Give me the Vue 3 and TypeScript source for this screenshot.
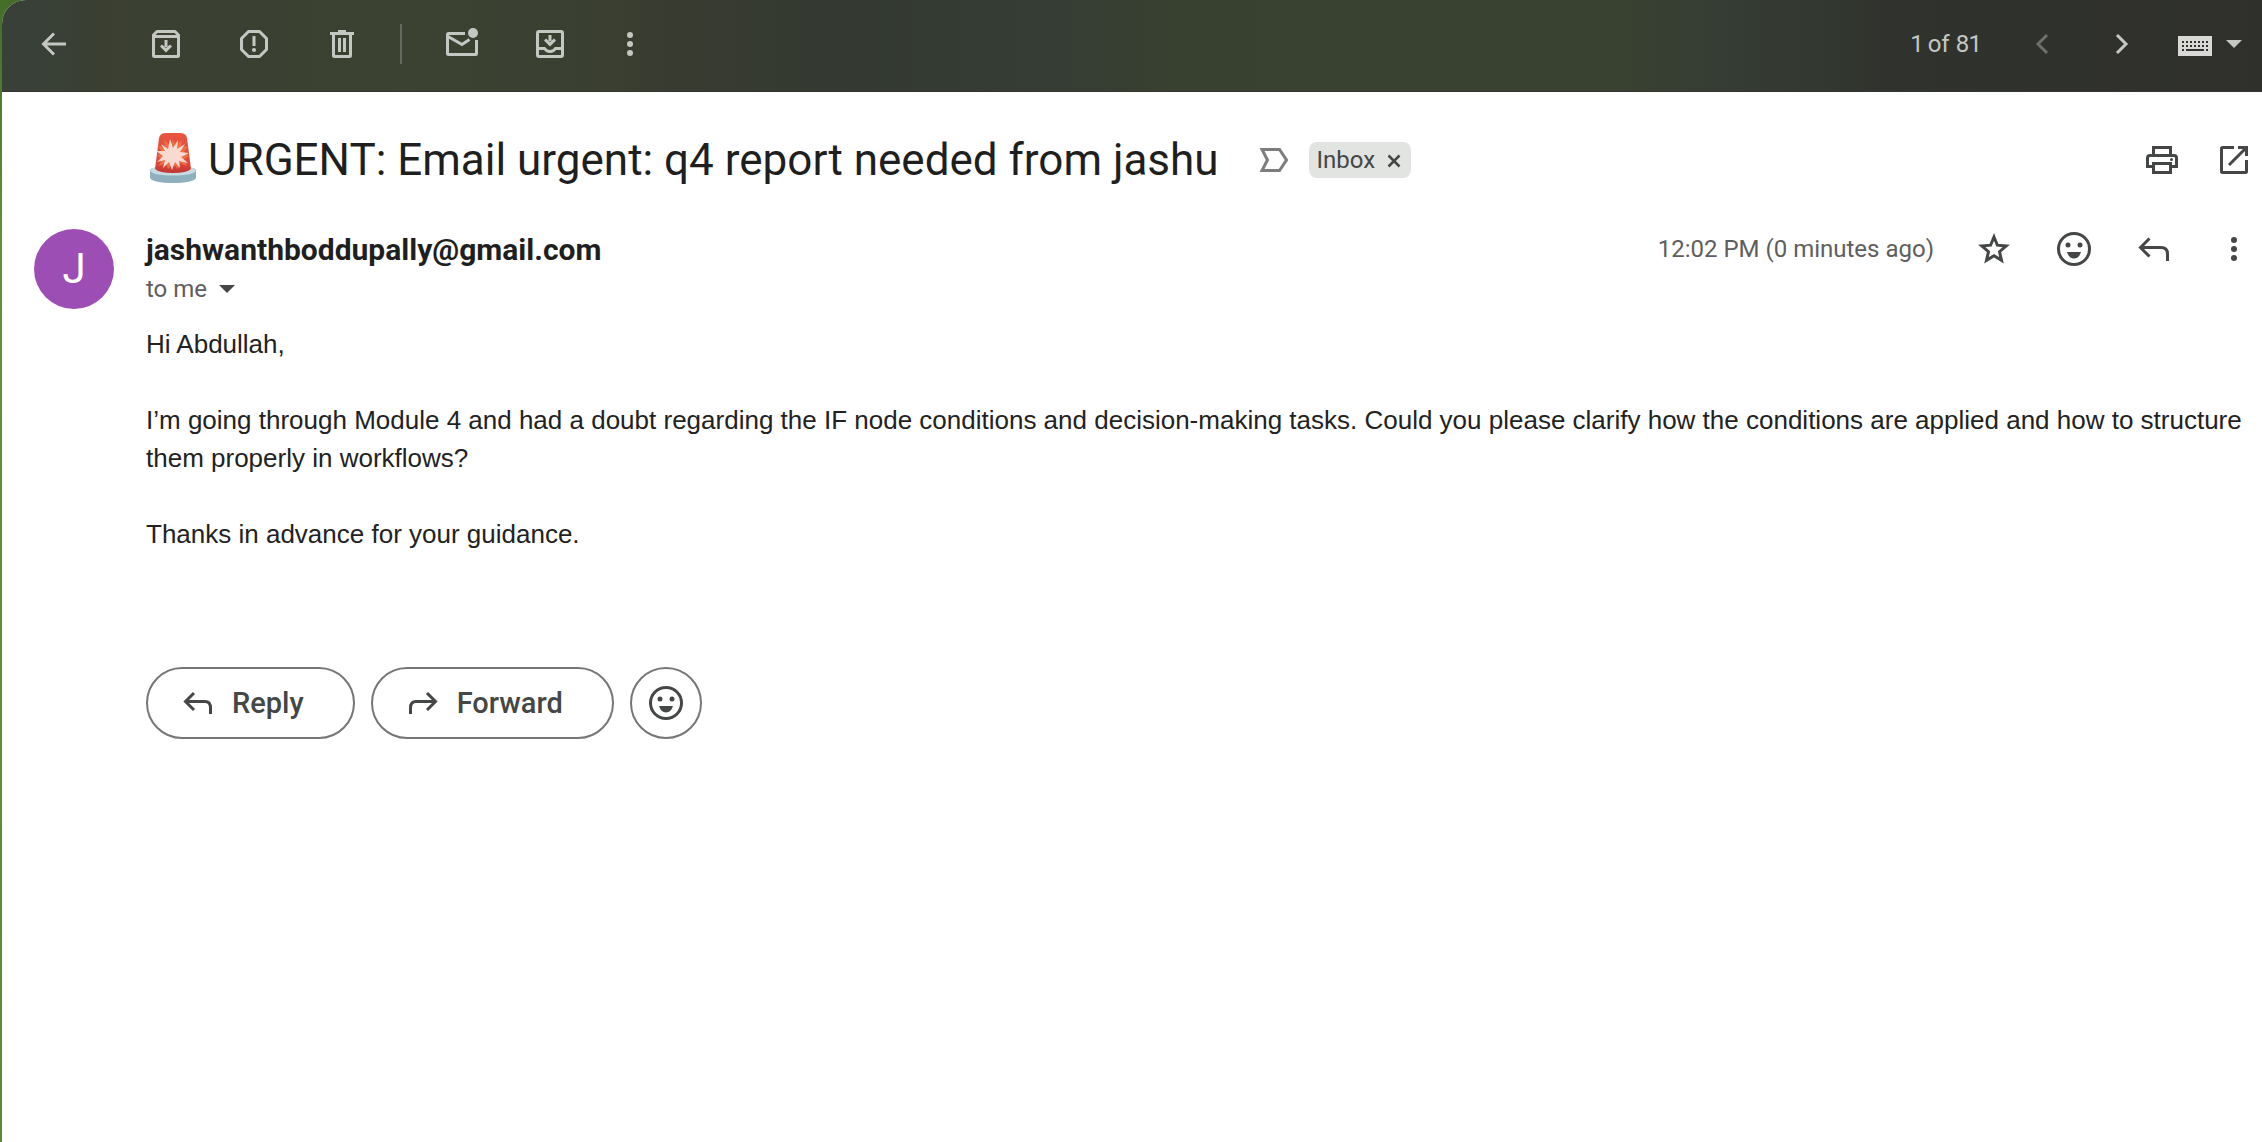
<script setup lang="ts">
import { ref } from 'vue'

const paragraphs: string[] = [
  'Hi Abdullah,',
  'I’m going through Module 4 and had a doubt regarding the IF node conditions and decision-making tasks. Could you please clarify how the conditions are applied and how to structure them properly in workflows?',
  'Thanks in advance for your guidance.',
]
const labels = ref<string[]>(['Inbox'])

function removeLabel(name: string): void {
  labels.value = labels.value.filter((label) => label !== name)
}
</script>

<template>
  <div class="window">
    <div class="panel">
      <header class="toolbar">
        <button class="tool back" aria-label="Back">
          <svg viewBox="0 0 40 40"><path class="line" d="M32 20H10M20 9.5 9.5 20 20 30.5" /></svg>
        </button>
        <button class="tool" aria-label="Archive">
          <svg viewBox="0 0 40 40">
            <path class="line" d="M7.5 12.5V11L11 7.5H29L32.5 11V31.5Q32.5 32.5 31.5 32.5H8.5Q7.5 32.5 7.5 31.5Z" stroke-linejoin="round" />
            <path class="line" d="M7.5 12.5H32.5M20 16V23" />
            <path class="solid" d="M14 22.5 16 20.5 20 24 24 20.5 26 22.5 20 28.5Z" />
          </svg>
        </button>
        <button class="tool" aria-label="Report spam">
          <svg viewBox="0 0 40 40">
            <path class="line" d="M14.5 7.5H25.5L32.5 14.5V25.5L25.5 32.5H14.5L7.5 25.5V14.5Z" stroke-linejoin="round" />
            <path class="line" d="M20 12V22" />
            <circle class="solid" cx="20" cy="26" r="2" />
          </svg>
        </button>
        <button class="tool" aria-label="Delete">
          <svg viewBox="0 0 40 40">
            <path class="line" d="M8 9.5H32M16 7.5H24M11.5 10V31.5Q11.5 32.5 12.5 32.5H27.5Q28.5 32.5 28.5 31.5V10M17.5 14V28M22.5 14V28" />
          </svg>
        </button>
        <span class="divider"></span>
        <button class="tool" aria-label="Mark as unread">
          <svg viewBox="0 0 40 40">
            <path class="line" d="M23 9.5H6.5Q5.5 9.5 5.5 10.5V29.5Q5.5 30.5 6.5 30.5H33.5Q34.5 30.5 34.5 29.5V16M6 12.5 20 20.5 27.5 15.5" />
            <circle class="solid" cx="31" cy="9" r="5" />
          </svg>
        </button>
        <button class="tool" aria-label="Move to">
          <svg viewBox="0 0 40 40">
            <rect class="line" x="7.5" y="7.5" width="25" height="25" rx="1.5" />
            <path class="line" d="M8 24.5H14.5Q16.5 27.5 20 27.5T25.5 24.5H32M20 11V17" />
            <path class="solid" d="M14 16.5 16 14.5 20 18 24 14.5 26 16.5 20 22.5Z" />
          </svg>
        </button>
        <button class="tool narrow" aria-label="More">
          <svg viewBox="0 0 40 40"><g class="solid"><circle cx="20" cy="11" r="3" /><circle cx="20" cy="20" r="3" /><circle cx="20" cy="29" r="3" /></g></svg>
        </button>

        <div class="pager">
          <span class="count">1 of 81</span>
          <button class="page-button" aria-label="Newer" disabled>
            <svg viewBox="0 0 40 40"><path class="line" d="M24 11 15 20 24 29" /></svg>
          </button>
          <button class="page-button" aria-label="Older">
            <svg viewBox="0 0 40 40"><path class="line" d="M16 11 25 20 16 29" /></svg>
          </button>
          <button class="keyboard" aria-label="Select input tool">
            <svg class="keys" viewBox="0 0 34 20">
              <path fill="#d8d9d6" d="M0 0H34V20H0Z" />
              <path stroke="#30322d" stroke-width="2" stroke-dasharray="2 2" d="M4 6H30M4 10H30" />
              <path stroke="#30322d" stroke-width="2" d="M4 14H6M8 14H26M28 14H30" />
            </svg>
            <svg class="caret" viewBox="0 0 16 8"><path class="solid" d="M0 0H16L8 8Z" /></svg>
          </button>
        </div>
      </header>

      <main class="mail">
        <div class="subject-row">
          <h1 class="subject">
            <svg class="siren" viewBox="0 0 46 52" role="img" aria-label="Police car light">
              <defs>
                <linearGradient id="dome" x1="0" y1="0" x2="0" y2="1">
                  <stop offset="0" stop-color="#e85640" />
                  <stop offset="0.8" stop-color="#dc4438" />
                  <stop offset="1" stop-color="#b93832" />
                </linearGradient>
              </defs>
              <path fill="#8fb0bd" d="M0 39Q0 36 4 36H42Q46 36 46 39V46Q43 51 23 51T0 46Z" />
              <path fill="#c8dbe2" d="M0 39Q2 35 8 35H38Q44 35 46 39Q42 43.5 23 43.5T0 39Z" />
              <path fill="url(#dome)" d="M9 6Q10 1 16 1H30Q36 1 37 6L41 37Q37 41 23 41T5 37Z" />
              <path fill="#ee7044" d="M23 8 26 13 32 8 31 15 38 14 34 20 39 24 34 27 37 34 30 31 28 37 23 32 18 37 16 31 9 34 12 27 7 24 12 20 8 14 15 15 14 8 20 13Z" />
              <path fill="#f9d9d0" d="M20 7 23 16 28 8 27 17 35 12 30 20 39 21 31 25 38 31 29 29 30 36 25 30 22 38 19 30 13 36 15 28 7 30 13 24 6 19 15 19 11 12 18 17Z" />
            </svg>
            <span>URGENT: Email urgent: q4 report needed from jashu</span>
          </h1>
          <svg class="importance" viewBox="0 0 30 26"><path d="M3 2.5H20.5L27.5 13 20.5 23.5H3L8.5 13Z" fill="none" stroke="#7d7d7d" stroke-width="3" /></svg>
          <span v-for="label in labels" :key="label" class="label">
            {{ label }}
            <button class="remove" :aria-label="`Remove label ${label}`" @click="removeLabel(label)">
              <svg viewBox="0 0 14 14"><path d="M1.5 1.5 12.5 12.5M12.5 1.5 1.5 12.5" stroke="#444746" stroke-width="2.5" /></svg>
            </button>
          </span>
          <div class="subject-actions">
            <button class="action" aria-label="Print all">
              <svg viewBox="0 0 40 40">
                <path class="line" d="M11.5 15V7.5H28.5V15M11 26.5H5.5V18Q5.5 15.5 8 15.5H32Q34.5 15.5 34.5 18V26.5H29" />
                <path class="line" d="M11.5 23.5H28.5V32.5H11.5Z" />
                <circle class="solid" cx="29.5" cy="19.5" r="1.5" />
              </svg>
            </button>
            <button class="action" aria-label="In new window">
              <svg viewBox="0 0 40 40">
                <path class="line" d="M20 7.5H8.5Q7.5 7.5 7.5 8.5V31.5Q7.5 32.5 8.5 32.5H31.5Q32.5 32.5 32.5 31.5V20M15 25 32 8M24 7.5H32.5V16" />
              </svg>
            </button>
          </div>
        </div>

        <article class="message">
          <div class="avatar">J</div>
          <div class="content">
            <div class="sender-row">
              <h2 class="sender">jashwanthboddupally@gmail.com</h2>
              <div class="sender-actions">
                <time class="time">12:02 PM (0 minutes ago)</time>
                <button class="action" aria-label="Star">
                  <svg viewBox="0 0 40 40"><path class="line" d="M20 8 23.4 16.2 32.2 16.9 25.5 22.7 27.5 31.3 20 26.7 12.5 31.3 14.5 22.7 7.8 16.9 16.6 16.2Z" /></svg>
                </button>
                <button class="action" aria-label="Add reaction">
                  <svg viewBox="0 0 40 40">
                    <circle class="line" cx="20" cy="20" r="15.5" />
                    <g class="solid"><circle cx="14" cy="16" r="2.5" /><circle cx="26" cy="16" r="2.5" /><path d="M13 23H27Q25 29.5 20 29.5T13 23Z" /></g>
                  </svg>
                </button>
                <button class="action" aria-label="Reply">
                  <svg viewBox="0 0 40 40"><path class="line" d="M33.5 32V25Q33.5 18.5 27 18.5H7M15.5 9.5 6.5 18.5 15.5 27.5" /></svg>
                </button>
                <button class="action" aria-label="More">
                  <svg viewBox="0 0 40 40"><g class="solid"><circle cx="20" cy="11" r="3" /><circle cx="20" cy="20" r="3" /><circle cx="20" cy="29" r="3" /></g></svg>
                </button>
              </div>
            </div>
            <button class="recipient">
              to me
              <svg class="caret" viewBox="0 0 16 8"><path class="solid" d="M0 0H16L8 8Z" /></svg>
            </button>
            <div class="body">
              <p v-for="text in paragraphs" :key="text">{{ text }}</p>
            </div>
            <div class="replies">
              <button class="pill">
                <svg viewBox="0 0 40 40"><path class="line" d="M32.5 31V25Q32.5 18.5 27 18.5H8M16 10 7.5 18.5 16 27" /></svg>
                Reply
              </button>
              <button class="pill">
                <svg viewBox="0 0 40 40"><path class="line" d="M7.5 31V25Q7.5 18.5 13 18.5H32M24 10 32.5 18.5 24 27" /></svg>
                Forward
              </button>
              <button class="pill round" aria-label="Add reaction">
                <svg viewBox="0 0 40 40">
                  <circle class="line" cx="20" cy="20" r="15.5" />
                  <g class="solid"><circle cx="14" cy="16" r="2.5" /><circle cx="26" cy="16" r="2.5" /><path d="M13 23H27Q25 29.5 20 29.5T13 23Z" /></g>
                </svg>
              </button>
            </div>
          </div>
        </article>
      </main>
    </div>
  </div>
</template>

<style>
body {
  margin: 0;
}
</style>

<style scoped>
.window {
  min-height: 100vh;
  display: flex;
  box-sizing: border-box;
  padding-left: 2px;
  background: linear-gradient(#446d28, #63903f 240px, #5c8a3c);
  font-family: Roboto, "Liberation Sans", sans-serif;
  color: #1f1f1f;
}
.panel {
  flex: 1;
  min-width: 0;
  border-top-left-radius: 24px;
  overflow: hidden;
  background: #fff;
}
button {
  display: flex;
  align-items: center;
  justify-content: center;
  padding: 0;
  border: 0;
  background: none;
  color: inherit;
  font: inherit;
}
svg {
  display: block;
  flex: none;
  width: 40px;
  height: 40px;
}
.line {
  fill: none;
  stroke: currentColor;
  stroke-width: 3;
}
.solid {
  fill: currentColor;
}
.caret {
  width: 16px;
  height: 8px;
}

.toolbar {
  display: flex;
  align-items: center;
  box-sizing: border-box;
  height: 92px;
  padding: 0 20px 3px 8px;
  border-bottom: 1px solid #343731;
  color: #c5c7c2;
  background: linear-gradient(90deg, #384039, #3a3f32 4%, #3b4231 18%, #3a3f31 27%, #383b30 30%, #343a32 38%, #363d34 46%, #384030 52%, #394130 71%, #363d34 76%, #32372f 81%, #30322d 84%, #2f302c);
}
.tool {
  width: 88px;
  height: 80px;
}
.back {
  margin-right: 24px;
}
.divider {
  width: 2px;
  height: 40px;
  margin: 0 16px 0 14px;
  background: #666b61;
}
.narrow {
  width: 72px;
}
.pager {
  display: flex;
  align-items: center;
  margin-left: auto;
  font-size: 24px;
}
.count {
  margin-right: 24px;
  font-variant-numeric: proportional-nums;
}
.page-button {
  width: 78px;
  height: 80px;
}
.page-button:disabled {
  color: #6d706a;
}
.keyboard {
  gap: 14px;
  margin-left: 18px;
}
.keys {
  width: 34px;
  height: 20px;
  margin-top: 4px;
}

.subject-row {
  display: flex;
  align-items: center;
  box-sizing: border-box;
  height: 137px;
  padding: 0 8px 2px 148px;
}
.subject {
  display: flex;
  align-items: center;
  gap: 12px;
  margin: 0;
  font-size: 44px;
  font-weight: 400;
  line-height: 56px;
}
.siren {
  width: 46px;
  height: 52px;
  margin-bottom: 4px;
}
.importance {
  width: 30px;
  height: 26px;
  margin: 0 20px 0 40px;
}
.label {
  display: flex;
  align-items: center;
  gap: 12px;
  height: 36px;
  padding: 0 10px 0 8px;
  border-radius: 8px;
  background: #e1e4e0;
  color: #444746;
  font-size: 24px;
}
.remove svg {
  width: 14px;
  height: 14px;
  margin-top: 2px;
}
.subject-actions {
  display: flex;
  gap: 32px;
  margin-left: auto;
  color: #444746;
}

.message {
  display: flex;
  align-items: flex-start;
  padding-left: 32px;
}
.avatar {
  width: 80px;
  height: 80px;
  border-radius: 50%;
  background: #9d4eb5;
  color: #fff;
  font-size: 42px;
  line-height: 80px;
  text-align: center;
}
.content {
  flex: 1;
  min-width: 0;
  margin-left: 32px;
}
.sender-row {
  display: flex;
  align-items: center;
  height: 40px;
  padding-right: 8px;
}
.sender {
  margin: 0;
  font-size: 30px;
  font-weight: 700;
}
.sender-actions {
  display: flex;
  align-items: center;
  gap: 40px;
  margin-left: auto;
  color: #444746;
}
.time {
  color: #5e5e5e;
  font-size: 24px;
}
.recipient {
  gap: 12px;
  height: 40px;
  color: #5e5e5e;
  font-size: 24px;
}
.recipient .caret {
  color: #444746;
}
.body {
  padding: 16px 16px 0 0;
  color: #222;
  font-family: "Liberation Sans", Arial, sans-serif;
  font-size: 26px;
  line-height: 38px;
}
.body p {
  margin: 0 0 38px;
}
.replies {
  display: flex;
  gap: 16px;
  margin-top: 114px;
}
.pill {
  gap: 14px;
  box-sizing: border-box;
  height: 72px;
  padding: 0 49px 0 30px;
  border: 2px solid #747775;
  border-radius: 36px;
  color: #444746;
  font-size: 29px;
  font-weight: 500;
}
.round {
  width: 72px;
  padding: 0;
}
</style>
